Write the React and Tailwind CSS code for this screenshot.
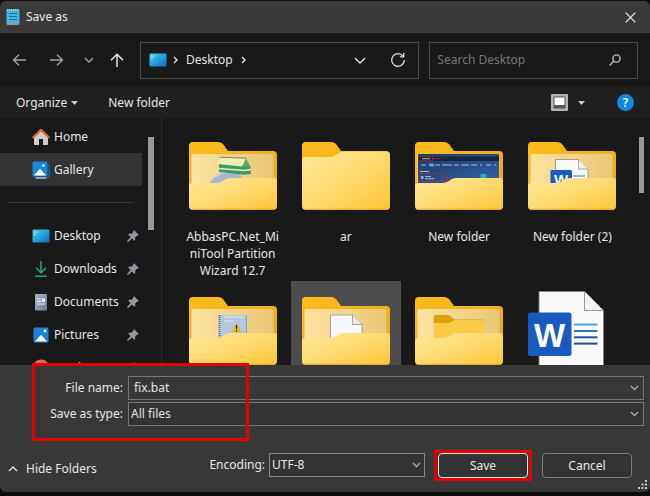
import { useState } from 'react';
import clsx from 'clsx';

const places = [
  { name: 'Desktop', Icon: DesktopIcon },
  { name: 'Downloads', Icon: DownloadsIcon },
  { name: 'Documents', Icon: DocumentsIcon },
  { name: 'Pictures', Icon: PicturesIcon },
  { name: 'Music', Icon: MusicIcon },
];

const files = [
  { id: 1, name: 'AbbasPC.Net_MiniTool Partition\nWizard 12.7', art: <InstallerFolder /> },
  { id: 2, name: 'ar', art: <ClosedFolder /> },
  { id: 3, name: 'New folder', art: <ScreenshotFolder /> },
  { id: 4, name: 'New folder (2)', art: <WordFolder /> },
  { id: 5, art: <ScriptFolder /> },
  { id: 6, art: <PageFolder />, selected: true },
  { id: 7, art: <NestedFolder /> },
  { id: 8, art: <WordFile /> },
];

/* Sidebar icons */
function DesktopIcon() {
  return (
    <svg width="18" height="18" viewBox="0 0 18 18">
      <defs>
        <linearGradient id="desk" x1="0" y1="0" x2="1" y2="1">
          <stop offset="0" stopColor="#3fd0e8" />
          <stop offset="0.5" stopColor="#23a2dd" />
          <stop offset="1" stopColor="#1567bd" />
        </linearGradient>
      </defs>
      <rect x="0.5" y="2.5" width="17" height="13" rx="1.2" fill="url(#desk)" />
      <path d="M2.2 4.4h1.4v1.3H2.2zM2.2 7h1.4v1.3H2.2zM4.8 4.4h1v1.3h-1z" fill="#e8fbff" />
    </svg>
  );
}

function DownloadsIcon() {
  return (
    <svg width="18" height="18" viewBox="0 0 18 18" fill="none" stroke="#23a583" strokeWidth="1.5">
      <path d="M9 1v11.500M4 7.800l5 5 5-5M3.200 16.200h11.600" />
    </svg>
  );
}

function DocumentsIcon() {
  return (
    <svg width="18" height="18" viewBox="0 0 18 18">
      <defs>
        <linearGradient id="docs" x1="0" y1="0" x2="1" y2="1">
          <stop offset="0" stopColor="#a9b9cd" />
          <stop offset="1" stopColor="#667b98" />
        </linearGradient>
      </defs>
      <rect x="3" y="1" width="12" height="16.500" rx="1.2" fill="url(#docs)" />
      <path d="M5 6h4M5 8.500h4M5 11h8" stroke="#f2f6fa" strokeWidth="1.2" />
      <rect x="10" y="5.400" width="3" height="3.600" fill="#f2f6fa" />
    </svg>
  );
}

function PicturesIcon() {
  return (
    <svg width="18" height="18" viewBox="0 0 18 18">
      <rect x="1.500" y="1.500" width="15" height="15" rx="1.5" fill="#1883d7" />
      <path d="M3 15.500l6-6.700 6 6.700z" fill="#fff" />
      <circle cx="13" cy="5" r="1.400" fill="#fff" />
    </svg>
  );
}

function MusicIcon() {
  return (
    <svg width="18" height="18" viewBox="0 0 18 18">
      <circle cx="9" cy="9" r="8.500" fill="#dc6a50" />
      <path d="M7.500 12V5l4-1v2l-3 1v5" fill="#fff" />
    </svg>
  );
}

function HomeIcon() {
  return (
    <svg width="18" height="18" viewBox="0 0 18 18">
      <path d="M2 8.500L9 2l7 6.500v7.800q0 .7-.7.700H11v-6H7v6H2.700Q2 17 2 16.300z" fill="#cfcccb" />
      <path d="M1.300 9.200L9 1.900l7.700 7.300" fill="none" stroke="#dc6a22" strokeWidth="2.200" strokeLinejoin="round" strokeLinecap="round" />
    </svg>
  );
}

function GalleryIcon() {
  return (
    <svg width="18" height="18" viewBox="0 0 18 18">
      <path d="M3.500 16.900h10.500q3.200 0 3.200-3.200V3" fill="none" stroke="#1c5f9e" strokeWidth="1.500" />
      <path d="M3.500 17h11" stroke="#b8d9ee" strokeWidth="1.200" />
      <rect x="0.500" y="0.500" width="15" height="15" rx="1.500" fill="#1786dc" />
      <path d="M1.800 14.500L8 7.800l6.200 6.700z" fill="#fff" />
      <circle cx="11.500" cy="4.500" r="1.300" fill="#fff" />
    </svg>
  );
}

function NotepadIcon() {
  return (
    <svg width="14" height="18" viewBox="0 0 14 18">
      <rect x="0.500" y="1.500" width="13" height="15" rx="1" fill="#45b7d8" />
      <path d="M1 16.500h12" stroke="#c68455" strokeWidth="1.200" />
      <path d="M1 1.700h12" stroke="#a5e3f2" strokeWidth="1.600" strokeDasharray="1.200 .8" />
      <path d="M3 5.500h8M3 8.500h8M3 11.500h8" stroke="#176a92" strokeWidth="1.200" />
    </svg>
  );
}

function PinIcon() {
  return (
    <svg width="12" height="12" viewBox="0 0 12 12" fill="#8f979f">
      <path d="M7.200.300l4.500 4.500-1.100 1.100-.6-.2-1.900 1.900q.7 2-.6 3.400L5 8.500 1 12l-.9-.2.100-.9 3.400-4L1.100 4.400q1.500-1.200 3.300-.6L6.300 1.900l-.2-.6z" />
    </svg>
  );
}

/* Small line glyphs */
function Chevron({ className, d = 'M1 1l4 4 4-4', w = 10, h = 6 }) {
  return (
    <svg width={w} height={h} viewBox={`0 0 ${w} ${h}`} fill="none" stroke="currentColor" strokeWidth="1.400" className={className}>
      <path d={d} />
    </svg>
  );
}

/* Folder artwork */
function FolderDefs() {
  return (
    <svg width="0" height="0" className="absolute" aria-hidden="true">
      <defs>
        <linearGradient id="front" x1="0" y1="0" x2="1" y2="1">
          <stop offset="0" stopColor="#ffe79b" />
          <stop offset="0.500" stopColor="#ffda70" />
          <stop offset="1" stopColor="#fec534" />
        </linearGradient>
        <linearGradient id="back" x1="0" y1="0" x2="1" y2="1">
          <stop offset="0" stopColor="#fdbd1c" />
          <stop offset="1" stopColor="#e9a61b" />
        </linearGradient>
        <linearGradient id="sheet" x1="0" y1="0" x2="1" y2="0">
          <stop offset="0" stopColor="#fde3a0" />
          <stop offset="1" stopColor="#e9c777" />
        </linearGradient>
        <linearGradient id="shot" x1="0" y1="0" x2="1" y2="1">
          <stop offset="0" stopColor="#1c3a68" />
          <stop offset="1" stopColor="#3564a8" />
        </linearGradient>
      </defs>
    </svg>
  );
}

function OpenFolder({ children }) {
  return (
    <svg width="88" height="68" viewBox="0 0 88 68">
      <path d="M0 4q0-4 4-4h25q3 0 5 2l5 7h45q4 0 4 4v35H0z" fill="url(#back)" />
      <rect x="2.500" y="12" width="82" height="40" rx="1.500" fill="url(#sheet)" />
      {children}
      <path d="M0 44q0-3 3-3h24q4 0 7-2l2-1.500q2-1.500 5-1.500h44q3 0 3 3v25q0 4-4 4H4q-4 0-4-4z" fill="url(#front)" />
      <path d="M2 67.300h84" stroke="#d29c27" strokeWidth="0.800" />
    </svg>
  );
}

function ClosedFolder() {
  return (
    <svg width="88" height="68" viewBox="0 0 88 68">
      <path d="M0 4q0-4 4-4h25q3 0 5 2l5 7h45q4 0 4 4v35H0z" fill="url(#back)" />
      <path d="M0 18q0-3 3-3h24q5 0 8-3l1-.8q2-1.700 5-1.700h43q4 0 4 4v50.500q0 4-4 4H4q-4 0-4-4z" fill="url(#front)" />
      <path d="M2 67.300h84" stroke="#d29c27" strokeWidth="0.800" />
    </svg>
  );
}

function InstallerFolder() {
  return (
    <OpenFolder>
      <ellipse cx="37" cy="39" rx="16" ry="8" fill="#a9b4d4" transform="rotate(-14 37 39)" />
      <path d="M22 39q5-8 17-9" fill="none" stroke="#c8d2e6" strokeWidth="1.600" />
      <path d="M30 21.500l24 1 7.500 1.500.5 8-7 .8-25-2.800z" fill="#3d9a62" />
      <path d="M30 26.500l25 2 7-1" fill="none" stroke="#dff0c8" strokeWidth="1.500" />
      <path d="M31 15.500l26 1-4 8-25-2.500z" fill="#f4eeb2" />
      <path d="M57 16.500l4.500 8-8.500.5z" fill="#58ab62" />
      <path d="M30.500 15.200l27 1" stroke="#6a8048" strokeWidth="0.900" />
    </OpenFolder>
  );
}

function ScreenshotFolder() {
  return (
    <OpenFolder>
      <rect x="3" y="12" width="81" height="32" rx="1" fill="url(#shot)" />
      <rect x="3" y="14.500" width="81" height="4.500" fill="#172641" />
      <rect x="3.500" y="14.500" width="14" height="4" fill="none" stroke="#9c2734" strokeWidth="0.800" />
      <path d="M7 16.700h8" stroke="#b9c3d1" strokeWidth="0.900" />
      <path d="M18 16.700h8" stroke="#a62c3c" strokeWidth="0.900" />
      <path d="M6 23h5M20 23h5M27 23h10M39 23h5M46 23h8M56 23h6M65 23h2M71 23h5M79 23h2" stroke="#a9bdd9" strokeWidth="1.200" />
      <rect x="14" y="21.500" width="5" height="3" rx="1" fill="#39b4e8" />
      <path d="M5 29.500h9" stroke="#b7c8e0" strokeWidth="0.900" />
      <rect x="4" y="31.500" width="27" height="8" fill="none" stroke="#9c2d48" strokeWidth="0.900" />
      <rect x="6" y="34" width="2.500" height="3" fill="#56c4ea" />
      <path d="M10 34.500h6M10 36.700h9" stroke="#c8d6ea" strokeWidth="0.800" />
      <path d="M32 36h7" stroke="#a62c3c" strokeWidth="0.900" />
      <rect x="65.500" y="32" width="6" height="6" fill="#2fa9b9" />
    </OpenFolder>
  );
}

function WordFolder() {
  return (
    <OpenFolder>
      <path d="M27.500 17.500h23l9.500 9.500v20H27.500z" fill="#fafafa" stroke="#85827c" strokeWidth="0.700" />
      <path d="M50.500 17.500V27H60" fill="#f1f1f1" stroke="#85827c" strokeWidth="0.700" />
      <path d="M45 34h12" stroke="#3c8cd0" strokeWidth="1.200" />
      <rect x="22.500" y="28" width="21.500" height="20" rx="1.500" fill="#185abd" />
      <text x="33.200" y="43" textAnchor="middle" fontSize="15" fontWeight="700" fontFamily="Liberation Sans, sans-serif" fill="#fff">W</text>
    </OpenFolder>
  );
}

function ScriptFolder() {
  return (
    <OpenFolder>
      <rect x="30" y="18" width="28" height="26" fill="#b2c8de" />
      <path d="M30.500 18v26" stroke="#596b7e" strokeWidth="2" strokeDasharray="1 1" />
      <path d="M35 20h20M35 24h9" stroke="#cddced" strokeWidth="2" />
      <path d="M57.500 19v20" stroke="#7c91aa" strokeWidth="0.800" />
      <path d="M47.500 25.500l5 10h-10z" fill="#e6b326" />
      <path d="M47.500 28v4M47.500 33v1.500" stroke="#28231a" strokeWidth="1.200" />
    </OpenFolder>
  );
}

function PageFolder() {
  return (
    <OpenFolder>
      <path d="M28.500 18h22l9.500 9.500V47H28.500z" fill="#f8f8fa" stroke="#8b887f" strokeWidth="0.700" />
      <path d="M50.500 18v9.500H60" fill="#e9e9ea" stroke="#8b887f" strokeWidth="0.700" />
    </OpenFolder>
  );
}

function NestedFolder() {
  return (
    <OpenFolder>
      <path d="M19 19.500q0-1.500 1.500-1.500H33q2 0 3 1.500l3 3h28q2 0 2 2V44H19z" fill="#dea00c" />
      <path d="M19 26h14q2 0 4-1.500l2-1.500h28q2 0 2 2v19H19z" fill="#fdca45" />
    </OpenFolder>
  );
}

function WordFile() {
  return (
    <svg width="76" height="80" viewBox="0 0 76 80">
      <path d="M11 .500h45.500l19 19V79.500H11z" fill="#fafafc" stroke="#84807c" strokeWidth="0.800" />
      <path d="M56.500.500v19h19" fill="#f2f2f4" stroke="#84807c" strokeWidth="0.800" />
      <g strokeWidth="2">
        <path d="M46 33.500h23.500" stroke="#4da3e2" />
        <path d="M46 40h23.500" stroke="#2f72c8" />
        <path d="M46 46.300h23.500" stroke="#1f53ac" />
        <path d="M46 52.600h23.500" stroke="#274a88" />
      </g>
      <rect x="0" y="21.500" width="43.500" height="43.500" rx="2.500" fill="#185abd" />
      <text x="21.700" y="55.500" textAnchor="middle" fontSize="33" fontWeight="700" fontFamily="Liberation Sans, sans-serif" fill="#fff">W</text>
    </svg>
  );
}

function TitleBar() {
  return (
    <header className="flex h-8 shrink-0 items-center rounded-t-md bg-[#3a3a3a] pr-3 pl-1.5">
      <NotepadIcon />
      <h1 className="ml-1.5 flex-1">Save as</h1>
      <button type="button" aria-label="Close" className="p-0.5">
        <svg width="11" height="11" viewBox="0 0 11 11" fill="none" stroke="#eee" strokeWidth="1.200">
          <path d="M.7.700l9.600 9.600M10.300.700L.7 10.300" />
        </svg>
      </button>
    </header>
  );
}

function NavBar() {
  return (
    <nav className="flex h-[54px] shrink-0 items-center px-3">
      <div className="flex w-32 shrink-0 items-center text-[#a5a5a5]">
        <button type="button" aria-label="Back">
          <Chevron w={14} h={12} d="M14 6H1.500M7 .7L1.500 6 7 11.300" />
        </button>
        <button type="button" aria-label="Forward" className="ml-6">
          <Chevron w={14} h={12} d="M0 6h12.500M7 .7L12.500 6 7 11.300" />
        </button>
        <button type="button" aria-label="Recent locations" className="ml-5">
          <Chevron />
        </button>
        <button type="button" aria-label="Up" className="ml-4 text-[#f0f0f0]">
          <Chevron w={14} h={14} d="M7 14V1.500M1 7.300L7 1.300l6 6" />
        </button>
      </div>
      <div className="flex h-[37px] min-w-0 flex-1 items-center border border-[#4c4c4c] pr-3 pl-2">
        <DesktopIcon />
        <Chevron w={5} h={8} d="M1 1l3 3-3 3" className="ml-1.5" />
        <span className="ml-2">Desktop</span>
        <Chevron w={5} h={8} d="M1 1l3 3-3 3" className="ml-2" />
        <button type="button" aria-label="Previous locations" className="ml-auto">
          <Chevron w={12} h={7} d="M1 1l5 5 5-5" />
        </button>
        <button type="button" aria-label="Refresh" className="ml-6">
          <svg width="16" height="16" viewBox="0 0 16 16" fill="none" stroke="#ddd" strokeWidth="1.300">
            <path d="M14.300 8A6.300 6.300 0 1 1 11 2.500l2.500 2" />
            <path d="M13.700 1v3.800H9.900" />
          </svg>
        </button>
      </div>
      <div className="ml-2.5 flex h-[37px] w-1/3 shrink-0 items-center border border-[#4c4c4c] pr-4 pl-[7px]">
        <input
          type="search"
          aria-label="Search Desktop"
          placeholder="Search Desktop"
          className="min-w-0 flex-1 bg-transparent outline-none placeholder:text-[#757575]"
        />
        <svg width="12" height="12" viewBox="0 0 12 12" fill="none" stroke="#bbb" strokeWidth="1.400">
          <circle cx="7.500" cy="4.500" r="3.600" />
          <path d="M4.900 7.100L.600 11.400" />
        </svg>
      </div>
    </nav>
  );
}

function Toolbar() {
  return (
    <div className="flex h-[31px] shrink-0 items-center bg-[#202020] px-4">
      <button type="button" className="flex items-center">
        Organize
        <svg width="7" height="4" viewBox="0 0 7 4" className="ml-1" fill="#ccc">
          <path d="M0 0h7L3.500 4z" />
        </svg>
      </button>
      <button type="button" className="ml-[30px]">New folder</button>
      <button type="button" aria-label="Change your view" className="ml-auto flex items-center">
        <svg width="17" height="17" viewBox="0 0 17 17">
          <rect x="0" y="0" width="17" height="17" rx="1" fill="#b5b1ae" />
          <rect x="2.500" y="2.500" width="12" height="12" fill="#555" />
          <rect x="3.500" y="3.500" width="10" height="7.500" fill="#fff" />
        </svg>
        <svg width="7" height="4" viewBox="0 0 7 4" className="ml-2.5" fill="#ccc">
          <path d="M0 0h7L3.500 4z" />
        </svg>
      </button>
      <button
        type="button"
        aria-label="Help"
        className="ml-8 flex h-[17px] w-[17px] items-center justify-center rounded-full bg-[#1688dc] font-medium text-white"
      >
        ?
      </button>
    </div>
  );
}

function Sidebar() {
  return (
    <aside className="flex w-[162px] shrink-0 border-r border-[#2b2b2b] pt-0.5">
      <div className="w-[142px]">
        <a href="#home" className="flex h-[33px] items-center gap-1 pl-8">
          <HomeIcon />
          Home
        </a>
        <a href="#gallery" className="flex h-[33px] items-center gap-1 bg-[#333] pl-8">
          <GalleryIcon />
          Gallery
        </a>
        <hr className="mx-2 my-4 border-[#373737]" />
        {places.map(({ name, Icon }) => (
          <a key={name} href={`#${name}`} className="flex h-[33px] items-center gap-1 pr-[3px] pl-8">
            <Icon />
            <span className="flex-1">{name}</span>
            <PinIcon />
          </a>
        ))}
      </div>
      <div className="mt-[17px] ml-1.5 h-[93px] w-1.5 bg-[#999]" />
    </aside>
  );
}

function FileGrid() {
  return (
    <main className="flex flex-1 overflow-hidden pt-2 pr-1.5 pl-4">
      <ul className="grid flex-1 auto-rows-[153px] grid-cols-4 gap-x-1 gap-y-0.5">
        {files.map((file) => (
          <li
            key={file.id}
            className={clsx('flex flex-col items-center', file.selected && 'bg-[#4d4d4d]')}
          >
            <div className="flex h-[100px] w-[88px] shrink-0 items-center">{file.art}</div>
            {file.name && (
              <p className="w-24 pt-0.5 text-center leading-[17px] break-all whitespace-pre-line">
                {file.name}
              </p>
            )}
          </li>
        ))}
      </ul>
      <div className="mt-[11px] ml-3 h-14 w-[5px] bg-[#999]" />
    </main>
  );
}

function Footer() {
  const [fileName, setFileName] = useState('fix.bat');

  return (
    <form className="relative shrink-0 rounded-b-md bg-[#383838]" onSubmit={(e) => e.preventDefault()}>
      <div className="grid grid-cols-[123px_1fr] items-center gap-x-[5px] gap-y-0.5 pt-[11px] pr-1.5">
        <label htmlFor="file-name" className="text-right">File name:</label>
        <div className="flex h-6 items-center border border-[#777] bg-[#383838] pr-1">
          <input
            id="file-name"
            value={fileName}
            onChange={(e) => setFileName(e.target.value)}
            className="min-w-0 flex-1 bg-transparent pl-[5px] outline-none"
          />
          <button type="button" aria-label="Previous file names">
            <Chevron w={9} h={6} d="M1 1l3.500 3.500L8 1" className="text-[#aaa]" />
          </button>
        </div>
        <label htmlFor="file-type" className="text-right">Save as type:</label>
        <div className="grid h-6 items-center">
          <select
            id="file-type"
            className="col-start-1 row-start-1 h-6 w-full appearance-none border border-[#777] bg-[#333] pl-0.5 outline-none"
          >
            <option>All files</option>
          </select>
          <Chevron w={9} h={6} d="M1 1l3.500 3.500L8 1" className="pointer-events-none z-10 col-start-1 row-start-1 mr-[5px] justify-self-end text-[#aaa]" />
        </div>
      </div>

      <div className="flex items-start pt-[27px] pr-[18px] pb-[7px] pl-2">
        <button type="button" className="flex h-8 items-center gap-2">
          <Chevron w={10} h={6} d="M1 5l4-4 4 4" />
          Hide Folders
        </button>
        <label htmlFor="encoding" className="ml-auto flex h-6 items-center">Encoding:</label>
        <div className="ml-1 grid h-6 w-[156px] items-center">
          <select
            id="encoding"
            className="col-start-1 row-start-1 h-6 w-full appearance-none border border-[#888] bg-[#333] pl-0.5 outline-none"
          >
            <option>UTF-8</option>
          </select>
          <Chevron w={9} h={6} d="M1 1l3.500 3.500L8 1" className="pointer-events-none z-10 col-start-1 row-start-1 mr-1 justify-self-end text-[#aaa]" />
        </div>
        <div className="relative ml-[13px]">
          <button type="submit" className="h-[25px] w-[90px] rounded border border-[#e5e5e5] bg-[#333]">
            Save
          </button>
          <span className="pointer-events-none absolute -inset-x-1 -inset-y-[3px] border-[3px] border-[#e80000]" />
        </div>
        <button type="button" className="ml-3.5 h-[25px] w-[90px] rounded border border-[#7c7c7c] bg-[#333]">
          Cancel
        </button>
      </div>

      {/* highlight around the two fields */}
      <span className="pointer-events-none absolute -top-0.5 left-8 h-[78px] w-[217px] border-[3px] border-[#e80000]" />
      <svg width="10" height="10" viewBox="0 0 10 10" fill="#ccc" className="absolute right-0.5 bottom-0.5">
        <path d="M7 0h2v2H7zM3.500 3.500h2v2h-2zM7 3.500h2v2H7zM0 7h2v2H0zM3.500 7h2v2h-2zM7 7h2v2H7z" />
      </svg>
    </form>
  );
}

export default function App() {
  return (
    <div className="h-screen bg-[#0d0d0d] pt-px pb-1 font-['Noto_Sans',sans-serif] text-xs leading-4 text-[#e6e6e6]">
      <FolderDefs />
      <div className="flex h-full flex-col rounded-md bg-[#191919]">
        <TitleBar />
        <NavBar />
        <Toolbar />
        <div className="flex min-h-0 flex-1 overflow-hidden">
          <Sidebar />
          <FileGrid />
        </div>
        <Footer />
      </div>
    </div>
  );
}
